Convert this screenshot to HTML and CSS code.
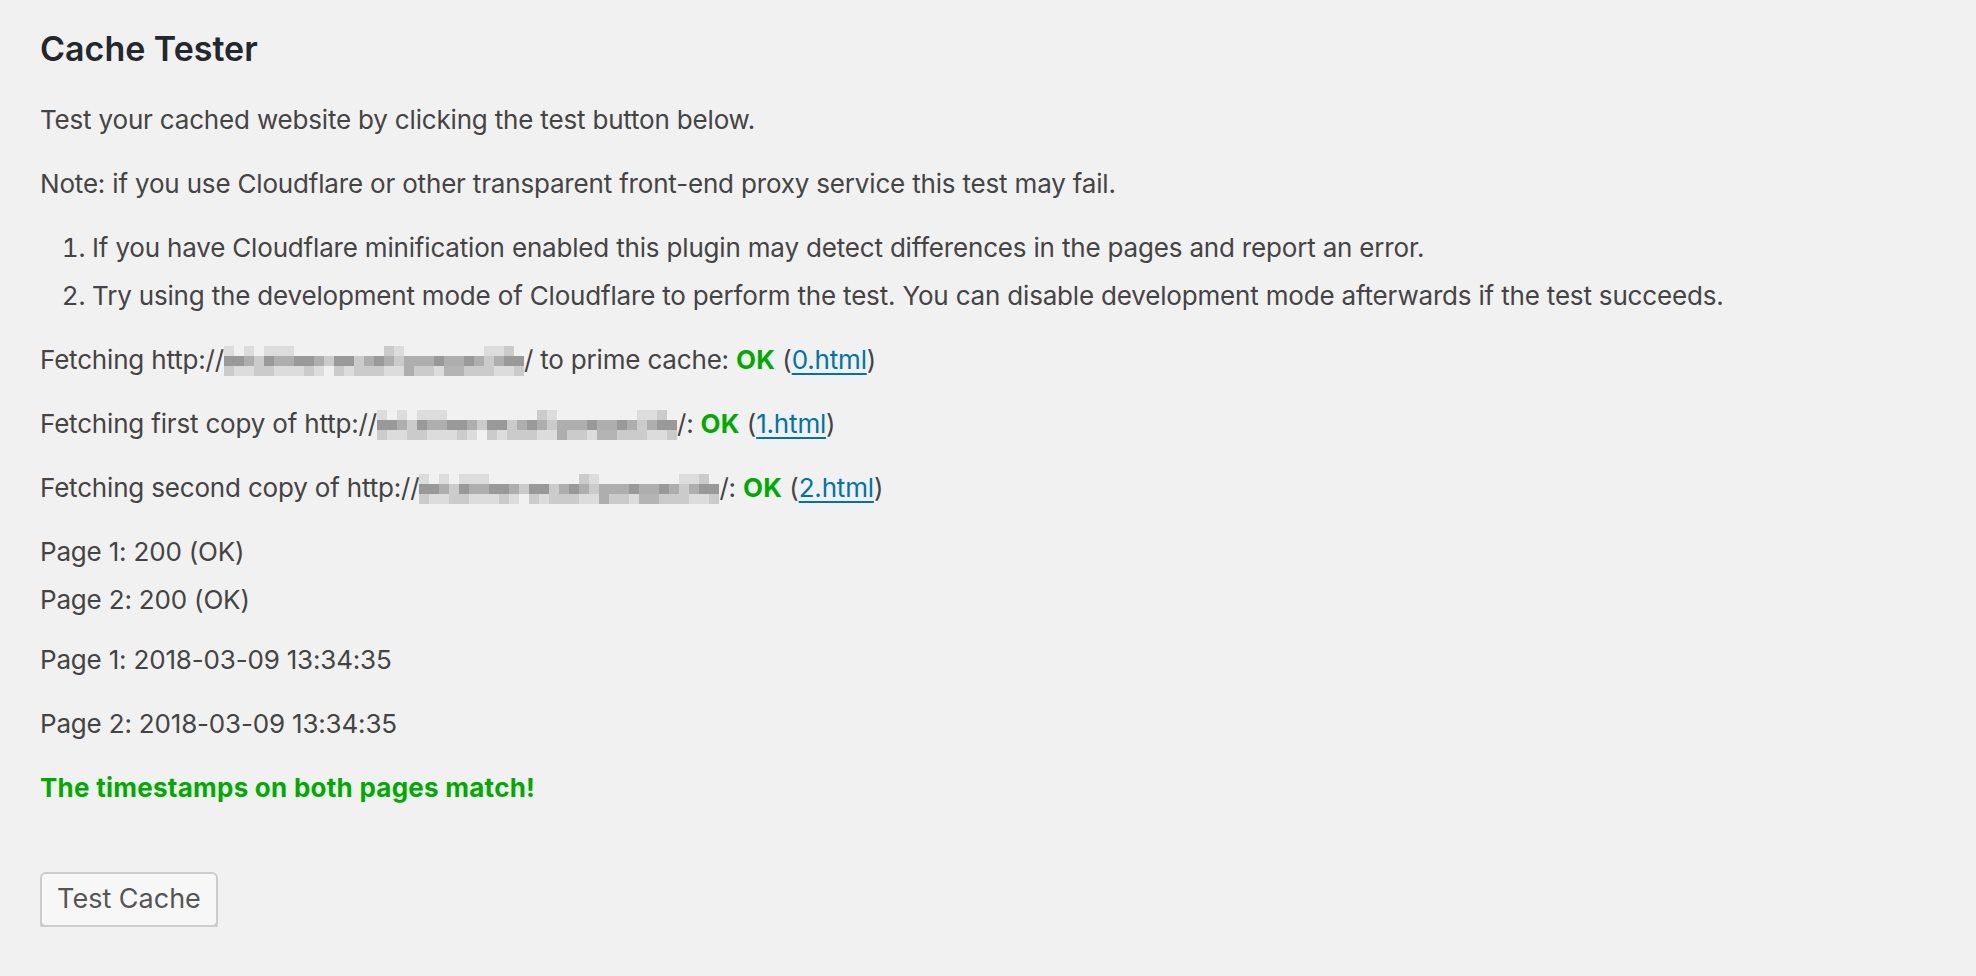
FILE: index.html
```html
<!DOCTYPE html>
<html lang="en">
<head>
<meta charset="utf-8">
<title>Cache Tester</title>
<link rel="stylesheet" href="styles.css">
</head>
<body>
<svg class="defs" width="0" height="0" aria-hidden="true">
  <defs>
    <symbol id="blur" viewBox="0 0 30 3">
      <g shape-rendering="crispEdges">
        <rect x="0" y="0" width="1" height="1" fill="#dcdcdc"/>
        <rect x="2" y="0" width="1" height="1" fill="#dcdcdc"/>
        <rect x="4" y="0" width="3" height="1" fill="#dcdcdc"/>
        <rect x="16" y="0" width="1" height="1" fill="#cbcbcb"/>
        <rect x="17" y="0" width="1" height="1" fill="#dcdcdc"/>
        <rect x="26" y="0" width="2" height="1" fill="#dcdcdc"/>
        <rect x="28" y="0" width="1" height="1" fill="#cbcbcb"/>

        <rect x="0" y="1" width="2" height="1" fill="#999"/>
        <rect x="2" y="1" width="1" height="1" fill="#aeaeae"/>
        <rect x="3" y="1" width="1" height="1" fill="#cbcbcb"/>
        <rect x="4" y="1" width="1" height="1" fill="#999"/>
        <rect x="5" y="1" width="2" height="1" fill="#aeaeae"/>
        <rect x="7" y="1" width="2" height="1" fill="#999"/>
        <rect x="9" y="1" width="1" height="1" fill="#aeaeae"/>
        <rect x="10" y="1" width="1" height="1" fill="#cbcbcb"/>
        <rect x="11" y="1" width="2" height="1" fill="#999"/>
        <rect x="13" y="1" width="1" height="1" fill="#cbcbcb"/>
        <rect x="14" y="1" width="1" height="1" fill="#aeaeae"/>
        <rect x="15" y="1" width="1" height="1" fill="#999"/>
        <rect x="16" y="1" width="1" height="1" fill="#aeaeae"/>
        <rect x="17" y="1" width="1" height="1" fill="#cbcbcb"/>
        <rect x="18" y="1" width="3" height="1" fill="#aeaeae"/>
        <rect x="21" y="1" width="1" height="1" fill="#999"/>
        <rect x="22" y="1" width="2" height="1" fill="#aeaeae"/>
        <rect x="24" y="1" width="1" height="1" fill="#999"/>
        <rect x="25" y="1" width="1" height="1" fill="#aeaeae"/>
        <rect x="26" y="1" width="1" height="1" fill="#cbcbcb"/>
        <rect x="27" y="1" width="1" height="1" fill="#aeaeae"/>
        <rect x="28" y="1" width="2" height="1" fill="#999"/>

        <rect x="0" y="2" width="1" height="1" fill="#cbcbcb"/>
        <rect x="1" y="2" width="2" height="1" fill="#dcdcdc"/>
        <rect x="3" y="2" width="2" height="1" fill="#cbcbcb"/>
        <rect x="5" y="2" width="3" height="1" fill="#dcdcdc"/>
        <rect x="8" y="2" width="1" height="1" fill="#cbcbcb"/>
        <rect x="9" y="2" width="1" height="1" fill="#dcdcdc"/>
        <rect x="11" y="2" width="1" height="1" fill="#cbcbcb"/>
        <rect x="12" y="2" width="1" height="1" fill="#dcdcdc"/>
        <rect x="13" y="2" width="3" height="1" fill="#cbcbcb"/>
        <rect x="16" y="2" width="2" height="1" fill="#dcdcdc"/>
        <rect x="18" y="2" width="1" height="1" fill="#aeaeae"/>
        <rect x="19" y="2" width="2" height="1" fill="#cbcbcb"/>
        <rect x="21" y="2" width="1" height="1" fill="#dcdcdc"/>
        <rect x="22" y="2" width="2" height="1" fill="#b4b4b4"/>
        <rect x="24" y="2" width="3" height="1" fill="#cbcbcb"/>
        <rect x="27" y="2" width="2" height="1" fill="#dcdcdc"/>
        <rect x="29" y="2" width="1" height="1" fill="#cbcbcb"/>
      </g>
    </symbol>
  </defs>
</svg>

<div class="wrap">
  <h2 class="title">Cache Tester</h2>
  <p class="para">Test your cached website by clicking the test button below.</p>
  <p class="para">Note: if you use Cloudflare or other transparent front-end proxy service this test may fail.</p>
  <ol class="notes">
    <li>If you have Cloudflare minification enabled this plugin may detect differences in the pages and report an error.</li>
    <li>Try using the development mode of Cloudflare to perform the test. You can disable development mode afterwards if the test succeeds.</li>
  </ol>
  <p class="para">Fetching http://<svg class="blur" viewBox="0 0 30 3" preserveAspectRatio="none"><use href="#blur"/></svg>/ to prime cache: <strong class="ok">OK</strong> (<a class="link" href="#">0.html</a>)</p>
  <p class="para">Fetching first copy of http://<svg class="blur" viewBox="0 0 30 3" preserveAspectRatio="none"><use href="#blur"/></svg>/: <strong class="ok">OK</strong> (<a class="link" href="#">1.html</a>)</p>
  <p class="para">Fetching second copy of http://<svg class="blur" viewBox="0 0 30 3" preserveAspectRatio="none"><use href="#blur"/></svg>/: <strong class="ok">OK</strong> (<a class="link" href="#">2.html</a>)</p>
  <p class="para status">Page 1: 200 (OK)<br>Page 2: 200 (OK)</p>
  <p class="para">Page 1: 2018-03-09 13:34:35</p>
  <p class="para">Page 2: 2018-03-09 13:34:35</p>
  <p class="para match">The timestamps on both pages match!</p>
  <div class="actions">
    <button class="btn" type="button">Test Cache</button>
  </div>
</div>
</body>
</html>
```

FILE: styles.css
```css
html, body {
  margin: 0;
  padding: 0;
  background: #f1f1f1;
}

body {
  font-family: Inter, "Noto Sans", "Liberation Sans", sans-serif;
  font-size: 26px;
  line-height: 48px;
  letter-spacing: -0.18px;
  color: #444;
}

.defs {
  position: absolute;
  width: 0;
  height: 0;
  overflow: hidden;
}

.wrap {
  padding: 27px 40px 0 40px;
}

.title {
  margin: 0 0 25px 0;
  font-size: 34px;
  line-height: 44px;
  font-weight: 600;
  letter-spacing: 0;
  color: #23282d;
}

.para {
  margin: 0 0 16px 0;
}

.status {
  margin-bottom: 12px;
}

.notes {
  margin: 0 0 16px 0;
  padding-left: 52px;
}

.blur {
  display: inline-block;
  width: 300px;
  height: 30px;
  vertical-align: -7px;
}

.ok {
  color: #00aa00;
  font-weight: 700;
  letter-spacing: 0.2px;
}

.link {
  color: #0073aa;
  text-decoration: underline;
  text-underline-offset: 4px;
  text-decoration-thickness: 2px;
}

.match {
  color: #00aa00;
  font-weight: 700;
  letter-spacing: 0.25px;
}

.actions {
  padding-top: 44px;
}

.btn {
  font-family: inherit;
  font-size: 27px;
  letter-spacing: 0;
  color: #555;
  background: #f7f7f7;
  border: 2px solid #ccc;
  border-radius: 6px;
  box-shadow: 0 3px 0 #ccc;
  height: 55px;
  width: 178px;
  padding: 0 0 2px 0;
  cursor: pointer;
}
```
